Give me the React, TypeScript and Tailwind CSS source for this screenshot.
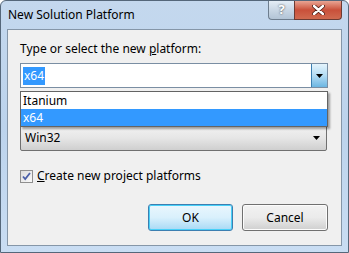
import { useState } from "react";

const FONT = { fontFamily: '"Noto Sans", "Open Sans", sans-serif' };

function Caret() {
  return (
    <svg width="7" height="4" viewBox="0 0 7 4">
      <path d="M0 0h7L3.5 4z" fill="#000" />
    </svg>
  );
}

export default function App() {
  const [checked, setChecked] = useState(true);

  return (
    <div className="h-[253px] w-[349px] bg-white text-[12px]" style={FONT}>
      <div className="relative flex h-[253px] w-[349px] flex-col rounded-t-[6px] border border-[#55677a] bg-gradient-to-b from-[#c4d8ee] via-[#bcd3ec] to-[#c9ddf3] px-[6px] pb-[6px]">
        {/* Title bar */}
        <div className="flex h-[28px] items-start">
          <div className="pt-[5px] pl-[1px] text-[12px] text-black">New Solution Platform</div>
          <div className="ml-auto flex">
            <div className="flex h-[19px] w-[26px] items-center justify-center rounded-bl-[4px] border border-t-0 border-r-0 border-[#6d7d8e] bg-gradient-to-b from-[#e4edf6] via-[#c9d7e5] to-[#b2c4d6] text-[13px] font-bold text-white [text-shadow:0_0_2px_#333]">
              ?
            </div>
            <div className="flex h-[19px] w-[48px] items-center justify-center rounded-br-[4px] border border-t-0 border-[#6d3b33] bg-gradient-to-b from-[#e8a493] via-[#c9503a] to-[#d06a50]">
              <svg width="13" height="10" viewBox="0 0 13 10">
                <path d="M2 1l9 8M11 1l-9 8" stroke="#4a1a12" strokeWidth="4" strokeLinecap="round" />
                <path d="M2 1l9 8M11 1l-9 8" stroke="#fff" strokeWidth="2.4" strokeLinecap="round" />
              </svg>
            </div>
          </div>
        </div>

        {/* Client area */}
        <div className="relative flex flex-1 flex-col border border-[#8596a8] bg-[#f0f0f0] px-[12px]">
          <div className="mt-[10px] text-black">
            Type or select the new <span className="underline">p</span>latform:
          </div>

          <div className="mt-[5px] flex h-[25px] w-[308px] items-center border border-[#7a8ea3] bg-white pl-[2px]">
            <span className="bg-[#3399ff] px-[1px] leading-[18px] text-white">x64</span>
            <div className="ml-auto flex h-[23px] w-[16px] items-center justify-center border-l border-[#3c7fb1] bg-gradient-to-b from-[#e5f4fc] via-[#b3dcf4] to-[#6bb6e2]">
              <Caret />
            </div>
          </div>

          <div className="mt-[37px] flex h-[26px] w-[307px] items-center rounded-[2px] border border-[#707070] bg-gradient-to-b from-[#f2f2f2] via-[#e6e6e6] to-[#cfcfcf] pl-[4px] pr-[6px] text-black">
            Win32
            <span className="ml-auto">
              <Caret />
            </span>
          </div>

          <label className="mt-[16px] flex items-center gap-[4px] text-black">
            <span
              onClick={() => setChecked(!checked)}
              className="flex h-[13px] w-[13px] items-center justify-center border border-[#8f8f8f] bg-gradient-to-br from-[#dcdcdc] to-[#fafafa]"
            >
              {checked && (
                <svg width="9" height="9" viewBox="0 0 9 9">
                  <path d="M1 4.5l2.2 2.5L8 1" fill="none" stroke="#4a5fa8" strokeWidth="1.8" />
                </svg>
              )}
            </span>
            <span>
              <span className="underline">C</span>reate new project platforms
            </span>
          </label>

          <div className="mt-[19px] flex justify-end gap-[9px] pr-[1px]">
            <button className="flex h-[27px] w-[85px] items-center justify-center rounded-[3px] border border-[#3c7fb1] bg-gradient-to-b from-[#eaf6fd] via-[#d9f0fc] to-[#a7d9f5] text-black shadow-[inset_0_0_0_1px_#48d0f8]">
              OK
            </button>
            <button className="flex h-[27px] w-[86px] items-center justify-center rounded-[3px] border border-[#707070] bg-gradient-to-b from-[#f2f2f2] via-[#ebebeb] to-[#cfcfcf] text-black shadow-[inset_0_0_0_1px_#fcfcfc]">
              Cancel
            </button>
          </div>

          {/* Open dropdown list */}
          <div className="absolute left-[12px] top-[61px] w-[308px] border border-[#646464] bg-white shadow-[2px_2px_2px_rgba(0,0,0,0.35)]">
            <div className="h-[17px] pl-[2px] leading-[17px] text-black">Itanium</div>
            <div className="h-[17px] bg-[#3399ff] pl-[2px] leading-[17px] text-white">x64</div>
          </div>
        </div>
      </div>
    </div>
  );
}
